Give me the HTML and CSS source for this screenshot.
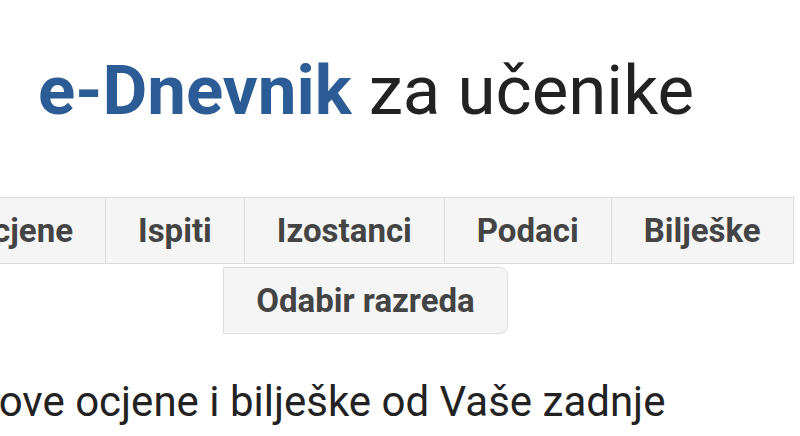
FILE: index.html
```html
<!DOCTYPE html>
<html lang="hr">
<head>
    <meta charset="UTF-8">
    <meta name="viewport" content="width=device-width, initial-scale=1.0">
    <title>e-Dnevnik za učenike</title>
    <link rel="stylesheet" href="styles.css">
</head>
<body>

<div class="page">
    <h1 class="title"><span class="brand">e-Dnevnik</span> za učenike</h1>

    <div class="tabs">
        <button class="tab">Ocjene</button>
        <button class="tab">Ispiti</button>
        <button class="tab">Izostanci</button>
        <button class="tab">Podaci</button>
        <button class="tab">Bilješke</button>
        <button class="tab">Odabir razreda</button>
    </div>
</div>

<p class="intro">Imate nove ocjene i bilješke od Vaše zadnje prijave.</p>

</body>
</html>
```

FILE: styles.css
```css
html, body {
    overflow: hidden;
}
body {
    margin: 0;
    padding-top: 50px;
    background-color: #fff;
    font-family: Roboto, "Liberation Sans", sans-serif;
    color: #222;
}
.page {
    width: 880px;
    margin-left: -74px;
}
.title {
    margin: 0;
    font-size: 69px;
    line-height: 82px;
    font-weight: 400;
    text-align: center;
    color: #222;
}
.brand {
    font-weight: 700;
    color: #2c5c95;
}
.tabs {
    display: flex;
    flex-wrap: wrap;
    justify-content: center;
    row-gap: 3px;
    margin-top: 65px;
}
.tab {
    font-family: Roboto, "Liberation Sans", sans-serif;
    font-size: 33px;
    font-weight: 700;
    line-height: 39px;
    color: #444;
    background-color: #f5f5f5;
    border: 1px solid #dcdcdc;
    padding: 13px 32px;
    margin: 0 0 0 -1px;
    border-radius: 0;
}
.tab:first-child {
    border-radius: 8px 0 0 8px;
}
.tab:last-child {
    border-radius: 0 8px 8px 0;
}
.intro {
    width: 880px;
    margin: 40px 0 0 -142px;
    font-size: 42px;
    line-height: 56px;
}
```
